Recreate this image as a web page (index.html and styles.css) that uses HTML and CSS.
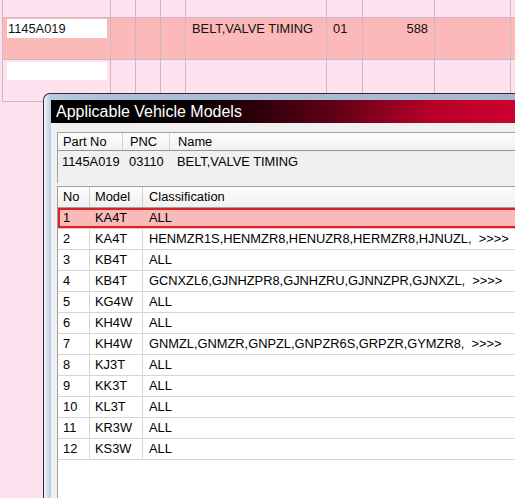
FILE: index.html
```html
<!DOCTYPE html>
<html lang="en">

<head>
    <meta charset="UTF-8">
    <meta name="viewport" content="width=device-width, initial-scale=1.0">
    <title>Applicable Vehicle Models</title>
    <link rel="stylesheet" href="styles.css">
</head>

<body>
    <!-- 背景的零件表 -->
    <div class="sheet">
        <div class="sheet-row r0">
            <div></div><div></div><div></div><div></div><div></div><div></div><div></div><div></div><div></div>
        </div>
        <div class="sheet-row r1">
            <div><div class="box">1145A019</div></div>
            <div></div>
            <div></div>
            <div></div>
            <div class="txt">BELT,VALVE TIMING</div>
            <div class="txt">01</div>
            <div class="txt num">588</div>
            <div></div>
            <div></div>
        </div>
        <div class="sheet-row r2">
            <div><div class="box"></div></div>
            <div></div><div></div><div></div><div></div><div></div><div></div><div></div><div></div>
        </div>
    </div>

    <!-- 弹出窗口 -->
    <div class="dialog">
        <div class="title">Applicable Vehicle Models</div>
        <div class="client">
            <div class="info">
                <div class="info-head">
                    <div>Part No</div>
                    <div>PNC</div>
                    <div>Name</div>
                </div>
                <div class="info-body">
                    <div>1145A019</div>
                    <div>03110</div>
                    <div>BELT,VALVE TIMING</div>
                </div>
            </div>

            <div class="list">
                <div class="list-head">
                    <div>No</div>
                    <div>Model</div>
                    <div>Classification</div>
                </div>
                <div class="list-row sel">
                    <div>1</div><div>KA4T</div><div>ALL</div>
                </div>
                <div class="list-row">
                    <div>2</div><div>KA4T</div><div>HENMZR1S,HENMZR8,HENUZR8,HERMZR8,HJNUZL,  &gt;&gt;&gt;&gt;</div>
                </div>
                <div class="list-row">
                    <div>3</div><div>KB4T</div><div>ALL</div>
                </div>
                <div class="list-row">
                    <div>4</div><div>KB4T</div><div>GCNXZL6,GJNHZPR8,GJNHZRU,GJNNZPR,GJNXZL,  &gt;&gt;&gt;&gt;</div>
                </div>
                <div class="list-row">
                    <div>5</div><div>KG4W</div><div>ALL</div>
                </div>
                <div class="list-row">
                    <div>6</div><div>KH4W</div><div>ALL</div>
                </div>
                <div class="list-row">
                    <div>7</div><div>KH4W</div><div>GNMZL,GNMZR,GNPZL,GNPZR6S,GRPZR,GYMZR8,  &gt;&gt;&gt;&gt;</div>
                </div>
                <div class="list-row">
                    <div>8</div><div>KJ3T</div><div>ALL</div>
                </div>
                <div class="list-row">
                    <div>9</div><div>KK3T</div><div>ALL</div>
                </div>
                <div class="list-row">
                    <div>10</div><div>KL3T</div><div>ALL</div>
                </div>
                <div class="list-row">
                    <div>11</div><div>KR3W</div><div>ALL</div>
                </div>
                <div class="list-row">
                    <div>12</div><div>KS3W</div><div>ALL</div>
                </div>
            </div>
        </div>
    </div>
</body>

</html>
```

FILE: styles.css
```css
* {
    padding: 0;
    margin: 0;
    box-sizing: border-box;
}

body {
    position: relative;
    width: 515px;
    height: 498px;
    overflow: hidden;
    background-color: #fde1ee;
    font-family: "Liberation Sans", Arial, sans-serif;
    font-size: 12.85px;
    color: #000;
}

/* 背景表格 */
.sheet {
    margin-left: 2px;
    border-left: 1px solid #cbb8c4;
}

.sheet-row {
    display: grid;
    grid-template-columns: 108px 25px 25px 25px 141px 36px 72px 76px 4px;
}

.sheet-row > div {
    border-right: 1px solid #cbb8c4;
    border-bottom: 1px solid #cbb8c4;
}

.sheet-row > div:last-child {
    border-right: none;
}

.r0 {
    height: 18px;
}

.r1,
.r2 {
    height: 42px;
}

.r1 {
    background-color: #fbb9b9;
}

.r1 > div {
    padding-top: 1px;
    line-height: 19px;
}

.sheet .box {
    width: 100px;
    height: 19px;
    margin-left: 4px;
    padding-left: 1px;
    background-color: #fff;
    color: #111;
}

.r2 .box {
    height: 18px;
    margin-top: 2px;
}

.sheet .txt {
    padding: 1px 6px 0;
    color: #111;
    white-space: nowrap;
}

.sheet .num {
    text-align: right;
}

/* 弹出窗口，右边和下边超出截图 */
.dialog {
    position: absolute;
    left: 43px;
    top: 93px;
    width: 472px;
    height: 405px;
    overflow: hidden;
    padding: 6px 0 0 7px;
    border-top: 1px solid #2e2e2e;
    border-left: 1px solid #2e2e2e;
    border-top-left-radius: 7px;
    background: linear-gradient(to right, #eef3f9 0, #b8cae0 7px, #abbed6 80px, #a6b9d1 100%);
}

.title {
    height: 23px;
    padding-left: 5px;
    line-height: 24px;
    font-size: 16px;
    color: #fff;
    white-space: nowrap;
    background: linear-gradient(to right, #000 0, #080002 150px, #5e0015 280px, #b70029 380px, #cd0031 470px);
}

.client {
    height: 100%;
    overflow: hidden;
    padding: 9px 0 0 6px;
    background-color: #f0f0f0;
}

.info {
    height: 51px;
    margin-bottom: 3px;
    border-top: 1px solid #a0a0a0;
    border-left: 1px solid #a0a0a0;
}

.info-head,
.info-body {
    display: grid;
    grid-template-columns: 65px 47px 1fr;
    white-space: nowrap;
}

.info-head {
    height: 18px;
    line-height: 17px;
    border-bottom: 1px solid #959595;
    background: linear-gradient(#fdfdfd, #f1f1f1);
}

.info-head div {
    padding-left: 7px;
    border-right: 1px solid #d3d3d3;
}

.info-head div:first-child {
    padding-left: 5px;
}

.info-head div:last-child {
    padding-left: 8px;
    border-right: none;
}

.info-body {
    padding-top: 2px;
    line-height: 17px;
}

.info-body div {
    padding-left: 6px;
}

.info-body div:first-child {
    padding-left: 4px;
}

.info-body div:last-child {
    padding-left: 7px;
}

/* 列表比窗口宽，右边被裁掉 */
.list {
    width: calc(100% + 10px);
    height: 330px;
    border-top: 1px solid #a0a0a0;
    border-left: 1px solid #a0a0a0;
    background-color: #fff;
}

.list-head,
.list-row {
    display: grid;
    grid-template-columns: 32px 53px 1fr;
    height: 21px;
    line-height: 20px;
    white-space: pre;
    overflow: hidden;
}

.list-head {
    border-bottom: 1px solid #a0a0a0;
    background: linear-gradient(#fdfdfd, #f0f0f0);
}

.list-head div {
    padding-left: 5px;
    border-right: 1px solid #d0d0d0;
}

.list-row {
    border-bottom: 1px solid #d6d6d6;
}

.list-row div {
    padding-left: 5px;
    border-right: 1px solid #d6d6d6;
}

.list-head div:last-child,
.list-row div:last-child {
    padding-left: 6px;
    border-right: none;
}

/* 选中行 */
.list-row.sel {
    background-color: #fbbaba;
    border-bottom-color: transparent;
    box-shadow: inset 0 0 0 2px #d42424;
}

.list-row.sel div {
    border-right-color: transparent;
}
```
